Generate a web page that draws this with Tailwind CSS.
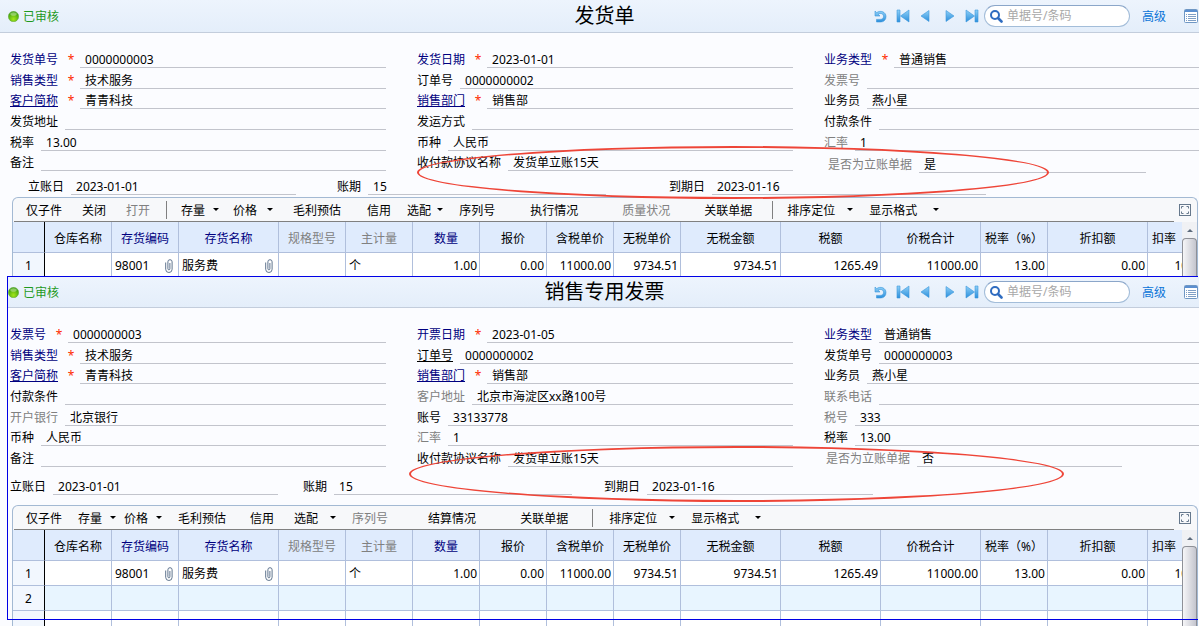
<!DOCTYPE html>
<html lang="zh-CN">
<head>
    <meta charset="UTF-8">
    <meta name="viewport" content="width=device-width, initial-scale=1.0">
    <title>发货单 / 销售专用发票</title>
    <script src="https://cdn.jsdelivr.net/npm/@tailwindcss/browser@4"></script>
</head>
<body class="h-screen overflow-hidden bg-[#fbfcff] font-['Noto_Sans','Noto_Sans_CJK_SC',sans-serif] text-[12px] leading-[18px] text-black">
    <svg class="absolute size-0">
        <defs>
            <linearGradient id="blue" x1="0" y1="0" x2="0" y2="1">
                <stop offset="0" stop-color="#8fd0f7"/>
                <stop offset="1" stop-color="#2b8fdc"/>
            </linearGradient>
            <radialGradient id="green" cx="50%" cy="75%" r="65%">
                <stop offset="0" stop-color="#a4e61c"/>
                <stop offset="1" stop-color="#3fa30d"/>
            </radialGradient>
        </defs>
        <symbol id="clip" viewBox="0 0 8 14">
            <path d="M.7 3.500v6.800a3.200 3.200 0 0 0 6.400 0V2.800a2.100 2.100 0 0 0-4.200 0V9.800a1 1 0 0 0 2 0V4" fill="none" stroke="#5f748e" stroke-width="1"/>
        </symbol>
    </svg>

    <main>
        <section id="delivery" class="relative"></section>
        <section id="invoice" class="relative -mt-0.5 bg-[#fbfcff] pt-px"></section>
    </main>

    <script>
        const tones = { navy: 'text-[#000080]', link: 'text-[#000080] underline', under: 'underline', gray: 'text-[#808080]', black: '' };

        const icons = {
            '刷新': '<path d="M2 2v5h5L5.200 5.200C7.500 3.600 10.500 4.800 10.500 7.400c0 2-1.500 3-3.500 3H3.500V13H7.500c3.300 0 5.500-2.200 5.500-5.500C13 3 7.500 .8 3.700 3.600z"/>',
            '首张': '<path d="M1 1h3v12H1zM13 1v12L4.500 7z"/>',
            '上张': '<path d="M10 1.500v11L2 7z"/>',
            '下张': '<path d="M4 1.500v11L12 7z"/>',
            '末张': '<path d="M10 1h3v12h-3zM1 1v12l8.500-6z"/>'
        };

        function header(id, title, cls) {
            const nav = Object.keys(icons).map(name => `
                <button type="button" aria-label="${name}"><svg class="block size-3.5" viewBox="0 0 14 14" fill="url(#blue)" stroke="#3d97dc" stroke-width=".6">${icons[name]}</svg></button>`).join('');
            return `
            <header class="grid grid-cols-[1fr_auto_1fr] items-center border-b border-[#c3cddc] bg-linear-to-b from-[#edf4fd] to-[#e4eefa] ${cls}">
                <div class="flex items-center gap-1 text-[#1f9a1f]">
                    <svg class="size-[11px]" viewBox="0 0 11 11"><circle cx="5.500" cy="5.500" r="5.200" fill="url(#green)" stroke="#6aa84a" stroke-width=".5"/><ellipse cx="5.500" cy="3" rx="3.200" ry="1.800" fill="#fff" opacity=".35"/></svg>
                    <span class="pt-0.5">已审核</span>
                </div>
                <h1 class="pl-0.5 text-[20px] leading-[30px]">${title}</h1>
                <div class="flex items-center justify-end">
                    <div class="mr-[5px] flex gap-[9px]">${nav}</div>
                    <div class="flex h-[22px] w-[146px] items-center gap-1 rounded-full border border-[#a3bdd9] border-t-[#8ba6c9] bg-white px-1">
                        <svg class="size-3.5 shrink-0" viewBox="0 0 14 14" fill="none" stroke="#2f6cc0"><circle cx="6" cy="6" r="4" stroke-width="2"/><path d="M9 9l3.500 3.500" stroke-width="2.600" stroke-linecap="round"/></svg>
                        <input id="${id}-search" aria-label="单据号/条码" placeholder="单据号/条码" class="w-full min-w-0 outline-none placeholder:text-[#a8a8a8]">
                    </div>
                    <a href="#" class="ml-3 pt-0.5 text-[#0a74d8]">高级</a>
                    <button type="button" aria-label="列表" class="mr-px ml-[18px]"><svg class="block size-3.5" viewBox="0 0 14 14"><rect x=".5" y=".5" width="13" height="13" rx="1" fill="#fff" stroke="#6f97c4"/><path d="M1 2h12" stroke="#5b8fd0" stroke-width="2"/><path d="M2 5.500h1m1 0h8M2 7.500h1m1 0h8M2 9.500h1m1 0h8M2 11.500h1m1 0h8" stroke="#7f9fc6"/></svg></button>
                </div>
            </header>`;
        }

        let fieldNo = 0;
        // f = [label, value, tone, required]
        function field(f, cls) {
            const id = 'f' + (++fieldNo);
            const [label, value, tone = 'black', required] = f;
            return `
            <div class="flex items-end leading-4 ${cls || ''}">
                <label for="${id}" class="shrink-0 ${tones[tone]}">${label}</label>
                ${required ? '<span class="w-[22px] shrink-0 pl-1 text-center text-[#ff2a00]">*</span>' : '<span class="w-[7px] shrink-0"></span>'}
                <input id="${id}" value="${value}" class="h-[17px] w-full min-w-0 border-b border-[#c2c4cc] pl-[5px] outline-none">
            </div>`;
        }

        // item = [text, margin class, extra class]; '|' is a separator, 'v' a drop-down arrow
        function toolbar(items) {
            return items.map(([text, ml, opt = '']) => {
                if (text === '|') return `<span class="h-[18px] w-px bg-[#808080] ${ml}"></span>`;
                if (text === 'v') return `<button type="button" aria-label="展开" class="${ml}"><svg class="h-[3px] w-1.5" viewBox="0 0 6 3"><path d="M0 0h6L3 3z"/></svg></button>`;
                return `<button type="button" class="shrink-0 pt-0.5 ${ml} ${opt}">${text}</button>`;
            }).join('');
        }

        const cols = [['仓库名称', 67], ['存货编码', 67, 'text-[#000080]'], ['存货名称', 100, 'text-[#000080]'], ['规格型号', 67, 'text-[#808080]'], ['主计量', 67, 'text-[#808080]'],
            ['数量', 67, 'text-[#000080]'], ['报价', 67], ['含税单价', 67], ['无税单价', 67], ['无税金额', 100], ['税额', 100], ['价税合计', 100], ['税率（%）', 67], ['折扣额', 100], ['扣率（%）', 67]];
        const line = ['', '98001', '服务费', '', '个', '1.00', '0.00', '11000.00', '9734.51', '9734.51', '1265.49', '11000.00', '13.00', '0.00', '100.00'];

        function cell(text, i) {
            if (i === 1 || i === 2) {
                text = text && `<div class="flex items-center justify-between pr-0.5"><span>${text}</span><svg class="h-3.5 w-2"><use href="#clip"/></svg></div>`;
            }
            return `<td class="border-r border-b border-[#b0bfdc] px-[3px] pt-0.5 pb-0 ${i > 4 ? 'pr-0.5 text-right' : ''}">${text}</td>`;
        }

        function grid(items, rows) {
            const body = rows.map((r, n) => `
                <tr class="h-[25px] ${n === 1 ? 'bg-[#e8f5ff]' : 'bg-white'}">
                    <th class="border-r border-b border-r-black border-b-[#b0bfdc] bg-[#f2f7fe] px-0 pt-0.5 pb-0 font-normal">${n < 2 ? n + 1 : ''}</th>
                    ${cols.map((c, i) => cell(r[i] || '', i)).join('')}
                </tr>`).join('');
            return `
            <div class="mr-px ml-3 overflow-hidden rounded-t-md border border-b-0 border-[#a3b9d3] bg-[#f7f8fa]">
                <div class="flex h-[23px] items-center pl-[13px]">
                    ${toolbar(items)}
                    <button type="button" aria-label="全屏" class="mr-1.5 ml-auto"><svg class="block size-3" viewBox="0 0 12 12" fill="none" stroke="#66788c"><rect x=".5" y=".5" width="11" height="11"/><path d="M2.500 4.500v-2h2M7.500 2.500h2v2M9.500 7.500v2h-2M4.500 9.500h-2v-2"/></svg></button>
                </div>
                <div class="mr-[23px] ml-px h-px bg-[#808080]"></div>
                <div class="flex">
                    <div class="min-w-0 flex-1 overflow-hidden">
                        <table class="w-[1202px] table-fixed border-separate border-spacing-0">
                            <colgroup><col style="width:32px">${cols.map(c => `<col style="width:${c[1]}px">`).join('')}</colgroup>
                            <thead>
                                <tr class="h-[31px] bg-[#dfebfd]">
                                    <th class="border-r border-b border-r-black border-b-[#b0bfdc]"></th>
                                    ${cols.map(c => `<th class="border-r border-b border-[#b0bfdc] px-0 pt-[3px] pb-0 font-normal whitespace-nowrap ${c[2] || ''}">${c[0]}</th>`).join('')}
                                </tr>
                            </thead>
                            <tbody>${body}</tbody>
                        </table>
                    </div>
                    <div class="flex w-[15px] flex-col bg-[#f0f1f4]">
                        <div class="flex h-4 items-center justify-center"><svg class="h-[3px] w-1.5" viewBox="0 0 6 3"><path d="M3 0l3 3H0z" fill="#5d6b7c"/></svg></div>
                        <div class="flex-1 rounded-t-sm border border-b-0 border-[#8e9097] bg-linear-to-r from-[#f6f6f8] to-[#c4c5ce]"></div>
                    </div>
                </div>
            </div>`;
        }

        const rows = (cols, n) => Array.from({ length: n }, (_, r) => cols.map(c => c[r] ? field(c[r]) : '').join('')).join('');

        document.getElementById('delivery').innerHTML = header('delivery', '发货单', 'h-[33px] pl-2') + `
            <form class="pt-3.5">
                <div class="-mr-px grid grid-cols-3 grid-rows-[21px_21px_20px_21px_21px_20px] gap-x-[31px] pl-2.5">
                    ${rows([
                        [['发货单号', '0000000003', 'navy', 1], ['销售类型', '技术服务', 'navy', 1], ['客户简称', '青青科技', 'link', 1], ['发货地址', ''], ['税率', '13.00'], ['备注', '']],
                        [['发货日期', '2023-01-01', 'navy', 1], ['订单号', '0000000002'], ['销售部门', '销售部', 'link', 1], ['发运方式', ''], ['币种', '人民币'], ['收付款协议名称', '发货单立账15天']],
                        [['业务类型', '普通销售', 'navy', 1], ['发票号', '', 'gray'], ['业务员', '燕小星'], ['付款条件', ''], ['汇率', '1', 'gray']]
                    ], 6)}
                    ${field(['是否为立账单据', '是', 'gray'], 'mr-[54px] ml-1 translate-y-0.5')}
                </div>
                <div class="flex h-6 items-end pl-7">
                    ${field(['立账日', '2023-01-01'], 'w-[268px]')}
                    ${field(['账期', '15'], 'ml-[41px] w-[269px]')}
                    ${field(['到期日', '2023-01-16'], 'ml-[63px] w-[317px]')}
                </div>
            </form>
            <div class="pt-0.5">` + grid([
                ['仅子件', ''], ['关闭', 'ml-5'], ['打开', 'ml-5', 'text-[#808080]'], ['|', 'ml-4'], ['存量', 'ml-3.5'], ['v', 'ml-2'], ['价格', 'ml-3.5'], ['v', 'ml-2.5'],
                ['毛利预估', 'ml-5'], ['信用', 'ml-[26px]'], ['选配', 'ml-4'], ['v', 'ml-1.5'], ['序列号', 'ml-4'], ['执行情况', 'ml-[35px]'], ['质量状况', 'ml-11', 'text-[#808080]'],
                ['关联单据', 'ml-[34px]'], ['|', 'ml-5'], ['排序定位', 'ml-3.5'], ['v', 'ml-3'], ['显示格式', 'ml-4'], ['v', 'ml-4']
            ], [line]) + `</div>
            <div class="pointer-events-none absolute top-[146px] left-[417px] h-[53px] w-[632px] rounded-[50%] border-2 border-[#ee4538]"></div>`;

        document.getElementById('invoice').innerHTML = header('invoice', '销售专用发票', 'ml-2 h-[31px]') + `
            <form class="pt-3.5">
                <div class="-mr-px grid grid-cols-3 grid-rows-[21px_21px_20px_21px_21px_20px_21px] gap-x-[31px] pl-2.5">
                    ${rows([
                        [['发票号', '0000000003', 'navy', 1], ['销售类型', '技术服务', 'navy', 1], ['客户简称', '青青科技', 'link', 1], ['付款条件', ''], ['开户银行', '北京银行', 'gray'], ['币种', '人民币'], ['备注', '']],
                        [['开票日期', '2023-01-05', 'navy', 1], ['订单号', '0000000002', 'under'], ['销售部门', '销售部', 'link', 1], ['客户地址', '北京市海淀区xx路100号', 'gray'], ['账号', '33133778'], ['汇率', '1', 'gray'], ['收付款协议名称', '发货单立账15天']],
                        [['业务类型', '普通销售', 'navy'], ['发货单号', '0000000003'], ['业务员', '燕小星'], ['联系电话', '', 'gray'], ['税号', '333', 'gray'], ['税率', '13.00']]
                    ], 7)}
                    ${field(['是否为立账单据', '否', 'gray'], 'mr-[78px] ml-0.5')}
                </div>
                <div class="flex h-7 items-end pl-2.5">
                    ${field(['立账日', '2023-01-01'], 'w-[268px]')}
                    ${field(['账期', '15'], 'ml-[25px] w-[269px]')}
                    ${field(['到期日', '2023-01-16'], 'ml-8 w-[269px]')}
                </div>
            </form>
            <div class="pt-2.5">` + grid([
                ['仅子件', ''], ['存量', 'ml-4'], ['v', 'ml-2'], ['价格', 'ml-2'], ['v', 'ml-2'], ['毛利预估', 'ml-4'], ['信用', 'ml-6'], ['选配', 'ml-5'], ['v', 'ml-3'],
                ['序列号', 'ml-4', 'text-[#808080]'], ['结算情况', 'ml-10'], ['关联单据', 'ml-11'], ['|', 'ml-6'], ['排序定位', 'ml-4'], ['v', 'ml-3'], ['显示格式', 'ml-4'], ['v', 'ml-4']
            ], [line, [], []]) + `</div>
            <div class="pointer-events-none absolute top-[170px] left-[409px] h-[56px] w-[655px] rounded-[50%] border-2 border-[#ee4538]"></div>
            <div class="pointer-events-none absolute top-0 right-px left-[7px] h-[344px] border-y border-l border-[#0000e6]"></div>`;
    </script>
</body>
</html>
